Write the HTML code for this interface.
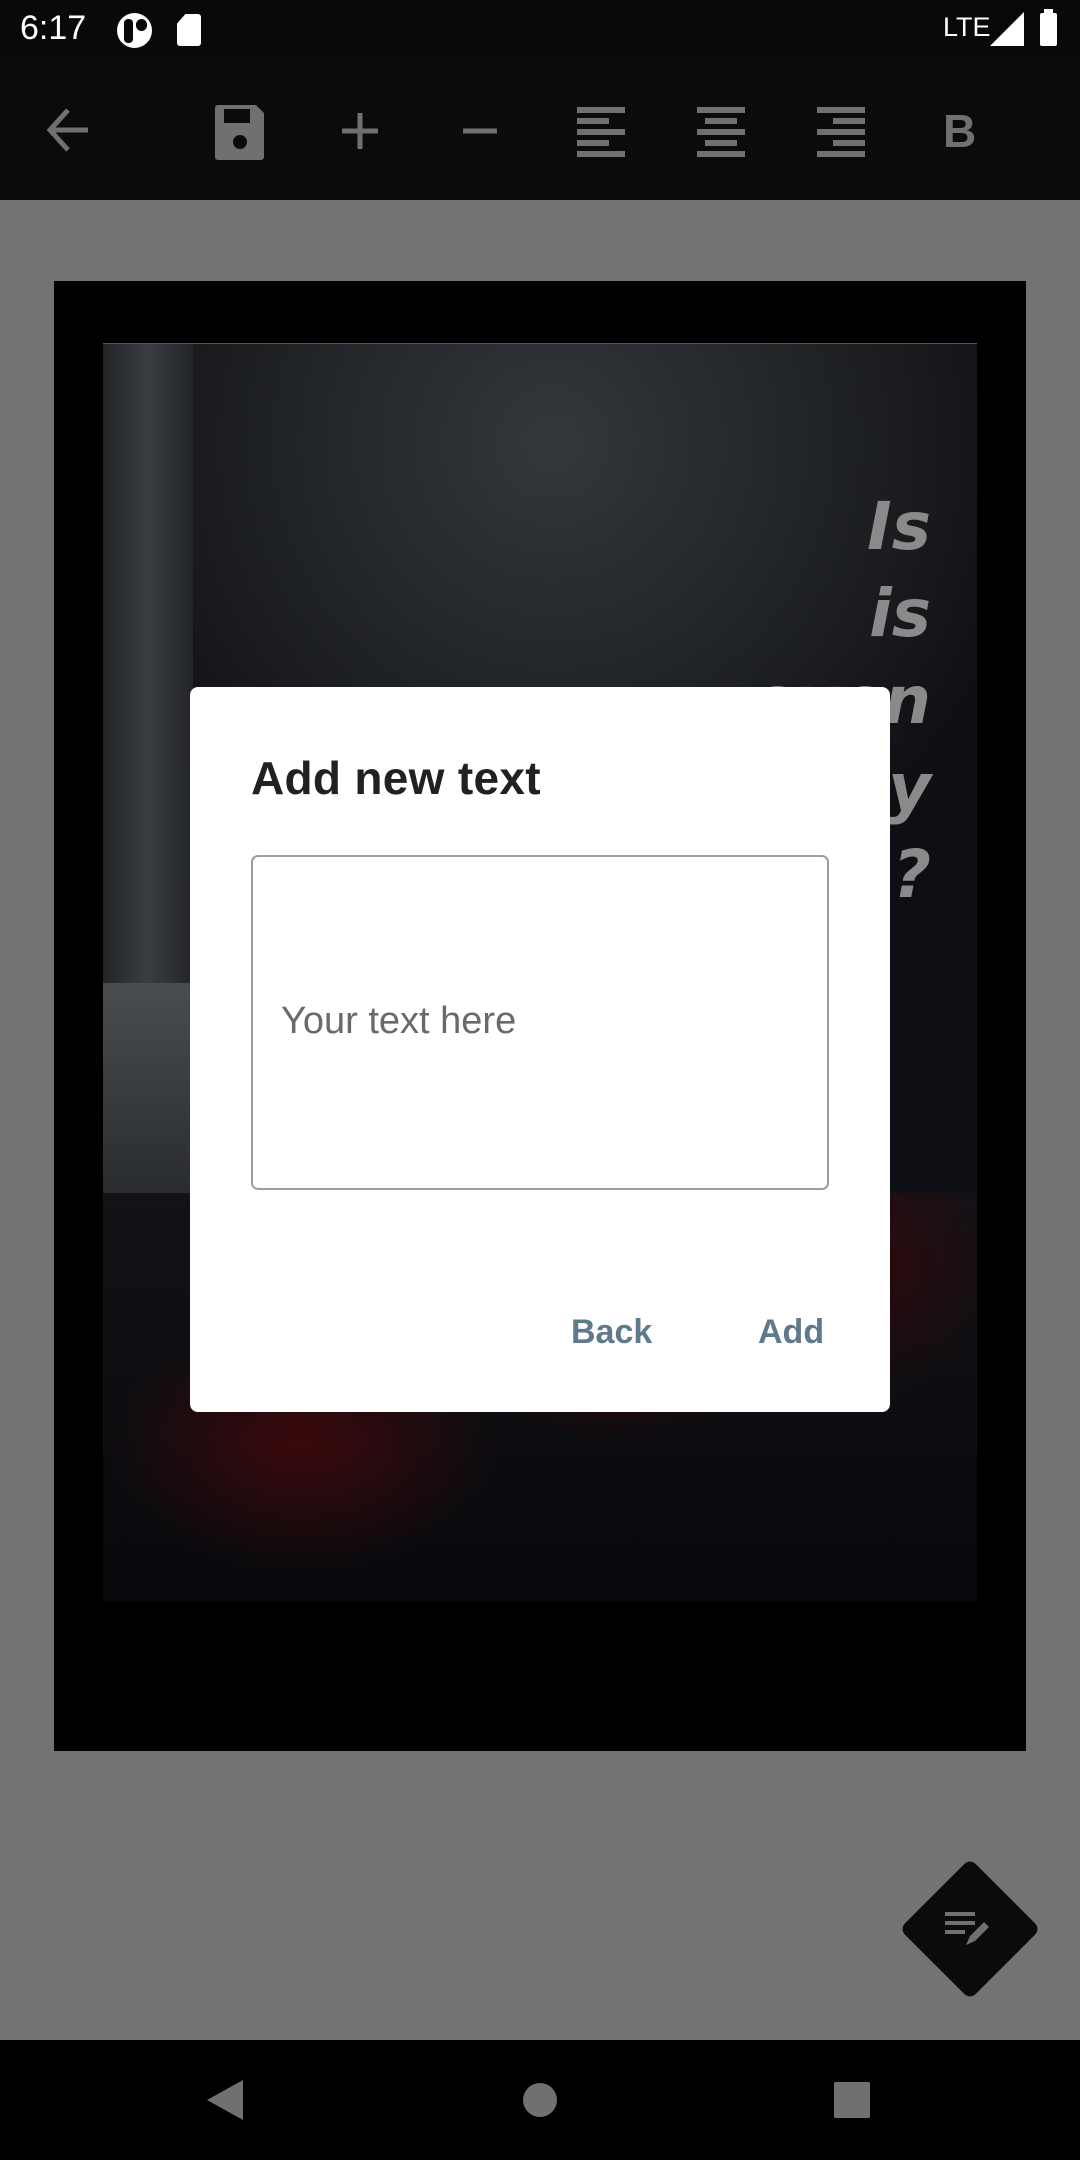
<!DOCTYPE html>
<html><head><meta charset="utf-8"><style>
*{margin:0;padding:0;box-sizing:border-box}
body{width:1080px;height:2160px;background:#737373;position:relative;overflow:hidden;font-family:"Liberation Sans",sans-serif}
.abs{position:absolute}
</style></head><body>
<div class="abs" style="left:0;top:0;width:1080px;height:58px;background:#0a0808"></div>
<div class="abs" style="left:20px;top:9px;color:#fff;font-size:34px;">6:17</div>
<div class="abs" style="left:117px;top:13px;width:35px;height:35px;border-radius:50%;background:#fff"></div>
<div class="abs" style="left:124px;top:19px;width:9px;height:24px;background:#0a0808;border-radius:4px"></div>
<div class="abs" style="left:136px;top:19px;width:11px;height:12px;background:#0a0808;border-radius:6px"></div>
<div class="abs" style="left:177px;top:14px;width:24px;height:32px;background:#fff;border-radius:3px;clip-path:polygon(35% 0,100% 0,100% 100%,0 100%,0 30%)"></div>
<div class="abs" style="left:943px;top:12px;color:#fff;font-size:27px">LTE</div>
<svg class="abs" style="left:990px;top:12px" width="34" height="34"><polygon points="34,0 34,34 0,34" fill="#fff"/></svg>
<div class="abs" style="left:1040px;top:13px;width:17px;height:33px;background:#fff;border-radius:2px"></div>
<div class="abs" style="left:1044px;top:9px;width:9px;height:5px;background:#fff"></div>

<div class="abs" style="left:0;top:58px;width:1080px;height:142px;background:#0d0a0a"></div>
<svg class="abs" style="left:0;top:58px" width="1080" height="142" fill="none" stroke="#707070">
<path d="M88 72H50M68 52L50 72L68 92" stroke-width="5"/>
<path d="M218 47h38l8 8v44a3 3 0 0 1-3 3h-43a3 3 0 0 1-3-3V50a3 3 0 0 1 3-3z" fill="#707070" stroke="none"/>
<rect x="224" y="51" width="26" height="14" fill="#0d0a0a" stroke="none"/>
<circle cx="240" cy="84" r="7" fill="#0d0a0a" stroke="none"/>
<path d="M360 55v36M342 73h36" stroke-width="5"/>
<path d="M463 73h34" stroke-width="5"/>
<g fill="#707070" stroke="none">
<rect x="577" y="49" width="48" height="6"/><rect x="577" y="60" width="32" height="6"/><rect x="577" y="71" width="48" height="6"/><rect x="577" y="82" width="32" height="6"/><rect x="577" y="93" width="48" height="6"/>
<rect x="697" y="49" width="48" height="6"/><rect x="705" y="60" width="32" height="6"/><rect x="697" y="71" width="48" height="6"/><rect x="705" y="82" width="32" height="6"/><rect x="697" y="93" width="48" height="6"/>
<rect x="817" y="49" width="48" height="6"/><rect x="833" y="60" width="32" height="6"/><rect x="817" y="71" width="48" height="6"/><rect x="833" y="82" width="32" height="6"/><rect x="817" y="93" width="48" height="6"/>
</g>
<text x="943" y="89" fill="#707070" stroke="none" font-size="46" font-weight="bold" font-family="Liberation Sans">B</text>
</svg>

<div class="abs" style="left:54px;top:281px;width:972px;height:1470px;background:#000"></div>
<div class="abs" style="left:103px;top:343px;width:874px;height:1258px;overflow:hidden;background:radial-gradient(ellipse 500px 500px at 450px 100px,#34373b,#1a1c20 70%,#0d0f14);">
  <div class="abs" style="left:0;top:0;width:90px;height:900px;background:linear-gradient(90deg,#222428,#3a3d42,#222428)"></div>
  <div class="abs" style="left:0;top:640px;width:90px;height:260px;background:linear-gradient(#4a4d50,#222428)"></div>
  <div class="abs" style="left:0;top:850px;width:874px;height:408px;background:radial-gradient(ellipse 200px 130px at 200px 250px,#3a080c,transparent),radial-gradient(ellipse 160px 90px at 510px 160px,#32060a,transparent),radial-gradient(ellipse 140px 140px at 760px 70px,#2e080c,transparent),linear-gradient(#111317,#08090c)"></div>
  <div class="abs" style="left:0;top:0;width:874px;height:1px;background:#555"></div>
  <div class="abs" style="right:46px;top:140px;color:#8a8a8a;font-style:italic;font-weight:bold;font-size:66px;line-height:87px;text-align:right;font-family:'DejaVu Sans',sans-serif">Is<br>is<br>even<br>y<br>?</div>
</div>

<div class="abs" style="left:190px;top:687px;width:700px;height:725px;background:#fff;border-radius:8px"></div>
<div class="abs" style="left:251px;top:751px;font-size:46px;color:#212121;font-weight:bold;letter-spacing:0.3px">Add new text</div>
<div class="abs" style="left:251px;top:855px;width:578px;height:335px;border:2px solid #9e9e9e;border-radius:7px"></div>
<div class="abs" style="left:281px;top:1000px;font-size:38px;color:#6a6a6a">Your text here</div>
<div class="abs" style="left:571px;top:1313px;font-size:34px;color:#5e7a8b;font-weight:bold">Back</div>
<div class="abs" style="left:758px;top:1313px;font-size:34px;color:#5e7a8b;font-weight:bold">Add</div>

<div class="abs" style="left:920px;top:1879px;width:100px;height:100px;background:#0d0a0a;transform:rotate(45deg);border-radius:8px"></div>
<svg class="abs" style="left:940px;top:1900px" width="60" height="60" fill="#707070">
<rect x="5" y="12" width="30" height="4"/><rect x="5" y="21" width="30" height="4"/><rect x="5" y="30" width="20" height="4"/>
<path d="M26 45l4-9 14-14 5 5-14 14z"/>
</svg>

<div class="abs" style="left:0;top:2040px;width:1080px;height:120px;background:#000"></div>
<svg class="abs" style="left:0;top:2040px" width="1080" height="120" fill="#707070">
<polygon points="243,40 243,80 207,60"/>
<circle cx="540" cy="60" r="17"/>
<rect x="834" y="42" width="36" height="36" rx="2"/>
</svg>
</body></html>
